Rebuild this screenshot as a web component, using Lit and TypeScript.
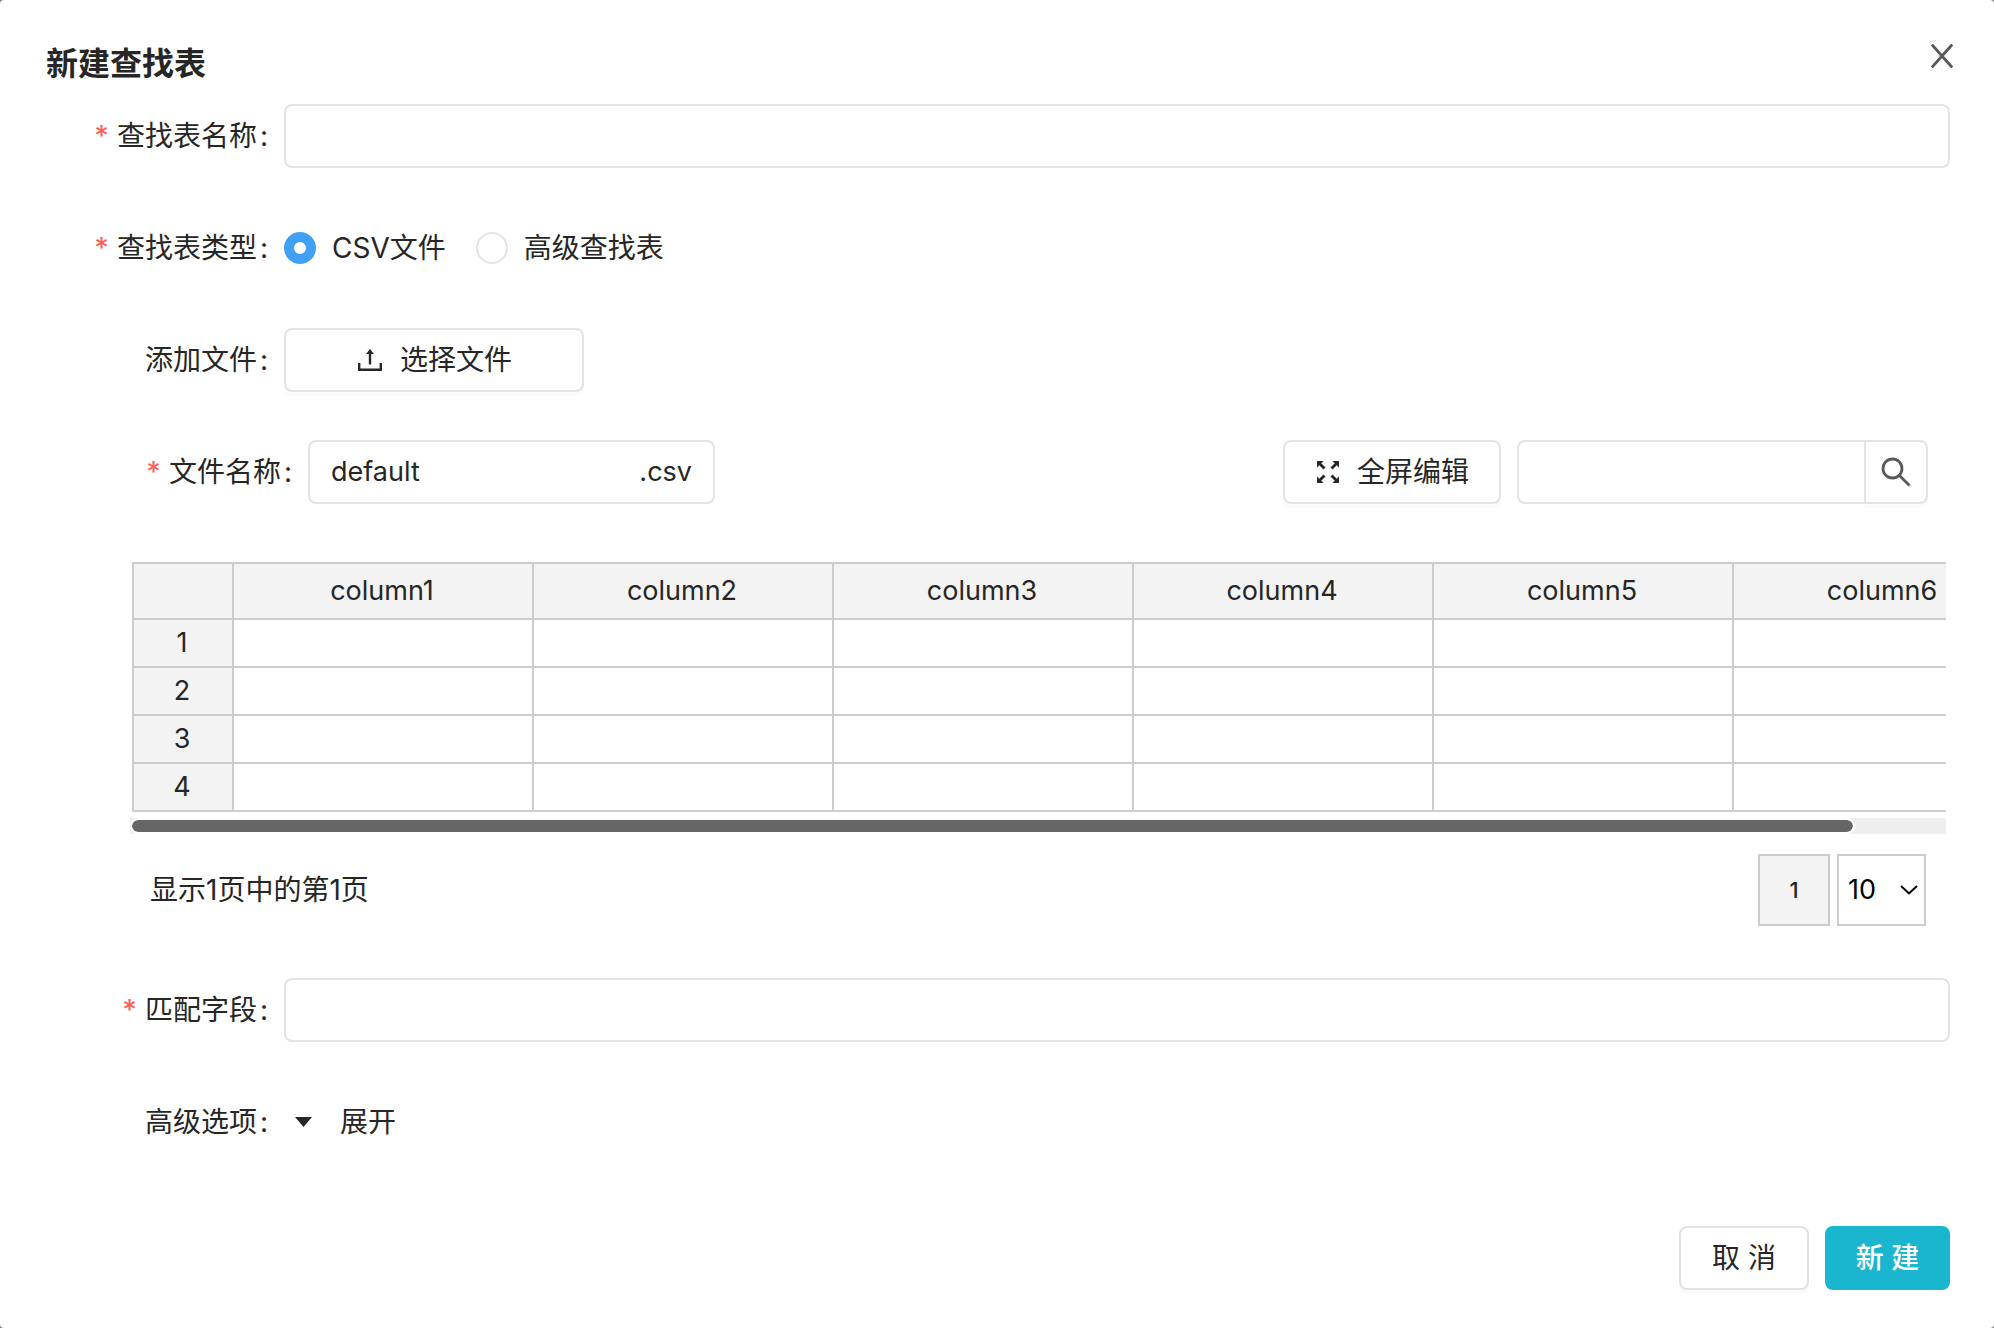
import { LitElement, html, css, svg } from "lit";
import { customElement, state } from "lit/decorators.js";

const COLUMNS = Array.from({ length: 6 }, (_, i) => `column${i + 1}`);
const ROWS = [1, 2, 3, 4];

@customElement("app-root")
export class AppRoot extends LitElement {
  static styles = css`
    :host {
      display: block;
      min-height: 100vh;
      background: #7f7f7f;
      font-family: Inter, "Noto Sans CJK SC", sans-serif;
      font-size: 28px;
      line-height: 40px;
      color: #262626;
    }
    *, *::before, *::after { box-sizing: border-box; }
    button, input, select { font: inherit; color: inherit; margin: 0; }
    button { cursor: pointer; }
    svg { display: block; flex: none; }
    .dialog {
      min-height: 100vh;
      background: #fff;
      border-radius: 4px;
      padding: 40px 44px 38px 46px;
      display: flex;
      flex-direction: column;
    }
    .header {
      display: flex;
      justify-content: space-between;
      align-items: flex-start;
      height: 64px;
    }
    .title { margin: 0; font-size: 32px; line-height: 48px; font-weight: 700; }
    .close {
      border: 0; background: none; padding: 0;
      width: 32px; height: 32px;
      margin-right: -8px;
      display: flex; align-items: center; justify-content: center;
      color: #595959;
    }
    .form { display: flex; flex-direction: column; gap: 48px; margin: 0; flex: 1; }
    .row { display: grid; grid-template-columns: 222px 1fr; column-gap: 16px; align-items: center; min-height: 64px; }
    .label { display: flex; justify-content: flex-end; gap: 8px; white-space: nowrap; }
    .required { color: #ff6059; font-weight: 500; }
    .text::after { content: ":"; margin-left: 3px; }
    .box {
      width: 100%; height: 64px;
      border: 2px solid #e3e3e3; border-radius: 8px;
      background: #fff; padding: 0 22px; outline: none;
    }
    .btn {
      display: inline-flex; align-items: center; justify-content: center;
      height: 64px; border: 2px solid #e3e3e3; border-radius: 8px;
      background: #fff; padding: 0 30px; white-space: nowrap;
      box-shadow: 0 4px 0 rgba(0, 0, 0, 0.02);
    }
    .upload { width: 300px; gap: 18px; padding: 0 28px 0 30px; }
    .radios { display: flex; gap: 30px; }
    .choice { display: flex; align-items: center; gap: 16px; cursor: pointer; }
    .radio {
      appearance: none; width: 32px; height: 32px;
      border: 2px solid #e3e3e3; border-radius: 50%; background: #fff;
    }
    .radio:checked { border: 10px solid #40a0f3; }
    .editor { padding-left: 84px; }
    .toolbar { display: flex; align-items: center; padding-right: 22px; }
    .toolbar .label { width: 162px; margin-right: 16px; }
    .filename {
      width: 407px; height: 64px; display: flex; align-items: center;
      border: 2px solid #e3e3e3; border-radius: 8px; padding: 0 21px; font-size: 27px;
    }
    .filename input { flex: 1; min-width: 0; border: 0; padding: 0; background: none; outline: none; }
    .tools { margin-left: auto; display: flex; gap: 16px; }
    .full { gap: 18px; padding: 0 30px 0 32px; }
    .search { display: flex; width: 411px; }
    .search .box { flex: 1; min-width: 0; border-right: 0; border-radius: 8px 0 0 8px; }
    .search .btn { width: 64px; padding: 0; border-radius: 0 8px 8px 0; color: #595959; }
    .sheet { margin: 58px 4px 0 0; overflow: hidden; }
    table { border-collapse: separate; border-spacing: 0; table-layout: fixed; width: 1900px; margin-left: 2px; font-size: 27px; }
    th, td { border: solid #ccc; border-width: 2px 0 0 2px; padding: 0 2px 0 0; text-align: center; font-weight: 400; height: 48px; }
    .corner, .head { height: 56px; }
    .num { width: 100px; }
    th { background: #f3f3f3; }
    tr:last-child > .cell { border-bottom-width: 2px; height: 50px; }
    .track { height: 16px; margin-top: 6px; background: #eee; }
    .thumb {
      width: 95%; height: 16px; background: #666; background-clip: padding-box;
      border: 2px solid #fff; border-radius: 8px;
    }
    .pager { display: flex; align-items: center; margin-top: 20px; padding: 0 24px 0 20px; height: 72px; }
    .pager p { margin: 0; flex: 1; }
    .page { width: 72px; height: 72px; border: 2px solid #ccc; background: #f3f3f3; padding: 0; font-size: 22px; font-weight: 500; }
    .size { position: relative; width: 89px; height: 72px; margin-left: 7px; }
    .size select {
      appearance: none; width: 100%; height: 100%; border: 2px solid #ccc; border-radius: 0;
      background: #fff; padding: 0 0 0 9px; color: #000; font-size: 27px;
    }
    .size svg { position: absolute; right: 8px; top: 31px; pointer-events: none; }
    .match { margin-top: 4px; }
    .expand { display: flex; align-items: center; gap: 28px; border: 0; background: none; padding: 0 0 0 11px; justify-self: start; }
    .footer { display: flex; justify-content: flex-end; gap: 16px; }
    .footer .btn { width: 130px; padding: 0; }
    .footer .primary { width: 125px; border: 0; background: #1ab5ce; color: #fff; box-shadow: none; font-weight: 500; }
  `;

  @state() private kind = "csv";

  private label(text: string, target: string, required = false) {
    return html`<label class="label" for=${target}>
      ${required ? html`<span class="required">*</span>` : ""}<span class="text">${text}</span>
    </label>`;
  }

  private choice(id: string, value: string, text: string) {
    return html`<label class="choice">
      <input class="radio" type="radio" id=${id} name="kind" .checked=${this.kind === value}
        @change=${() => (this.kind = value)} />${text}
    </label>`;
  }

  private arrow(angle: number) {
    return svg`<g transform="rotate(${angle} 11 11)">
      <path d="M0 0h6.500L0 6.500z" /><path d="M2 2l5.500 5.500" stroke="currentColor" stroke-width="2.800" />
    </g>`;
  }

  render() {
    return html`
      <main class="dialog" role="dialog" aria-labelledby="title">
        <header class="header">
          <h1 class="title" id="title">新建查找表</h1>
          <button class="close" type="button" aria-label="关闭">
            <svg width="24" height="24" viewBox="0 0 24 24" fill="none" stroke="currentColor" stroke-width="2.800">
              <path d="M1.800 0.500L22.200 23.500M22.200 0.500L1.800 23.500" />
            </svg>
          </button>
        </header>
        <form class="form" @submit=${(e: Event) => e.preventDefault()}>
          <div class="row">
            ${this.label("查找表名称", "name", true)}
            <input class="box" id="name" type="text" />
          </div>
          <div class="row">
            ${this.label("查找表类型", "kind-csv", true)}
            <div class="radios">
              ${this.choice("kind-csv", "csv", "CSV文件")}
              ${this.choice("kind-adv", "advanced", "高级查找表")}
            </div>
          </div>
          <div class="row">
            ${this.label("添加文件", "upload")}
            <button class="btn upload" id="upload" type="button">
              <svg width="24" height="22" viewBox="0 0 24 22" fill="none" stroke="currentColor" stroke-width="2.400">
                <path d="M1.200 14v6.800h21.600V14M12 15.500V3" />
                <path d="M12 0l4 5h-8z" fill="currentColor" stroke="none" />
              </svg>选择文件
            </button>
          </div>
          <section class="editor">
            <div class="toolbar">
              ${this.label("文件名称", "file", true)}
              <div class="filename">
                <input id="file" type="text" value="default" /><span>.csv</span>
              </div>
              <div class="tools">
                <button class="btn full" type="button">
                  <svg width="22" height="22" viewBox="0 0 22 22" fill="currentColor">
                    ${[0, 90, 180, 270].map((a) => this.arrow(a))}
                  </svg>全屏编辑
                </button>
                <div class="search">
                  <input class="box" type="search" aria-label="搜索" />
                  <button class="btn" type="button" aria-label="搜索">
                    <svg width="32" height="32" viewBox="0 0 32 32" fill="none" stroke="currentColor" stroke-width="2.800">
                      <circle cx="12.500" cy="12.500" r="9.500" /><path d="M19.200 19.200L29.500 29.500" />
                    </svg>
                  </button>
                </div>
              </div>
            </div>
            <div class="sheet">
              <table>
                <thead>
                  <tr>
                    <th class="corner num"></th>
                    ${COLUMNS.map((c) => html`<th class="head" scope="col">${c}</th>`)}
                  </tr>
                </thead>
                <tbody>
                  ${ROWS.map((r) => html`<tr>
                    <th class="cell num" scope="row">${r}</th>
                    ${COLUMNS.map(() => html`<td class="cell"></td>`)}
                  </tr>`)}
                </tbody>
              </table>
              <div class="track"><div class="thumb"></div></div>
            </div>
            <div class="pager">
              <p>显示1页中的第1页</p>
              <button class="page" type="button">1</button>
              <div class="size">
                <select aria-label="每页行数"><option>10</option></select>
                <svg width="18" height="10" viewBox="0 0 18 10" fill="none" stroke="#000" stroke-width="2">
                  <path d="M1 1l8 7.500L17 1" />
                </svg>
              </div>
            </div>
          </section>
          <div class="row match">
            ${this.label("匹配字段", "match", true)}
            <input class="box" id="match" type="text" />
          </div>
          <div class="row">
            ${this.label("高级选项", "expand")}
            <button class="expand" id="expand" type="button">
              <svg width="17" height="10" viewBox="0 0 17 10"><path d="M0 0h17L8.500 10z" fill="currentColor" /></svg>展开
            </button>
          </div>
        </form>
        <footer class="footer">
          <button class="btn" type="button">取 消</button>
          <button class="btn primary" type="button">新 建</button>
        </footer>
      </main>
    `;
  }
}
